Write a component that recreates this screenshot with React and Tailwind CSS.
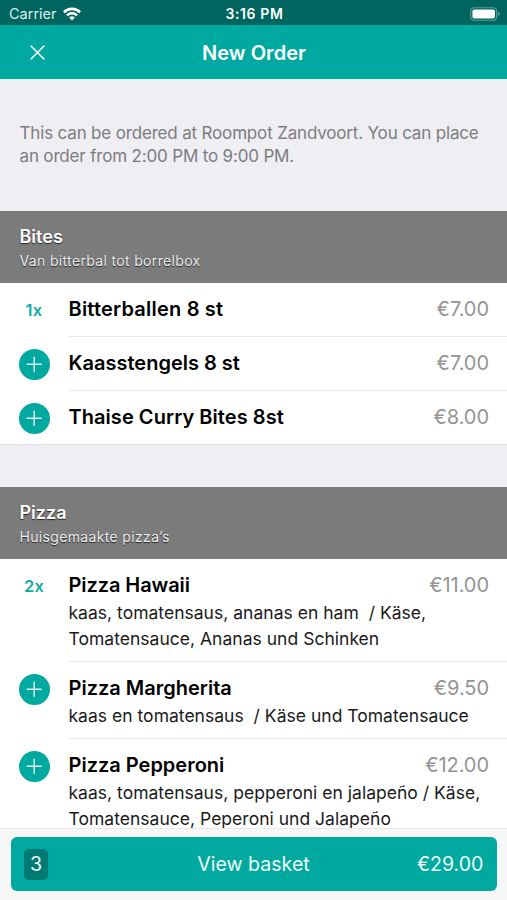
import React from "react";

const bites = [
  { qty: 1, name: "Bitterballen 8 st", price: "€7.00", track: "tracking-[0.2px]", height: "h-[54px]" },
  { name: "Kaasstengels 8 st", price: "€7.00", track: "tracking-[0px]", height: "h-[54px]" },
  { name: "Thaise Curry Bites 8st", price: "€8.00", track: "tracking-[0.05px]", height: "h-[53px]" },
];

const pizzas = [
  {
    qty: 2,
    name: "Pizza Hawaii",
    price: "€11.00",
    track: "tracking-[-0.08px]",
    lines: ["kaas, tomatensaus, ananas en ham  / Käse,", "Tomatensauce, Ananas und Schinken"],
    height: "h-[103px]",
  },
  {
    name: "Pizza Margherita",
    price: "€9.50",
    track: "tracking-[0px]",
    lines: ["kaas en tomatensaus  / Käse und Tomatensauce"],
    height: "h-[77px]",
  },
  {
    name: "Pizza Pepperoni",
    price: "€12.00",
    track: "tracking-[0px]",
    lines: ["kaas, tomatensaus, pepperoni en jalapeño / Käse,", "Tomatensauce, Peperoni und Jalapeño"],
    height: "h-[103px]",
  },
];

function StatusBar() {
  return (
    <div className="grid h-[25px] shrink-0 grid-cols-3 items-center bg-[#00645f] pt-[3px] pr-[6px] pl-[9px] text-white">
      <div className="flex items-center gap-[6px]">
        <span className="text-[14.5px] leading-none text-[#d9efed]">Carrier</span>
        <svg width="18" height="14" viewBox="0 0 18 14" fill="none" stroke="#fff" strokeWidth="2.6">
          <path d="M.9 5.2a11.6 11.6 0 0 1 16.2 0" />
          <path d="M3.9 8.4a7.3 7.3 0 0 1 10.2 0" />
          <path d="M9 13.6l-2.9-3a4.1 4.1 0 0 1 5.8 0z" fill="#fff" stroke="none" />
        </svg>
      </div>
      <div className="pr-[1px] text-center text-[14px] leading-none font-semibold tracking-[0.6px]">3:16 PM</div>
      <svg className="justify-self-end" width="31" height="14" viewBox="0 0 31 14">
        <rect x=".7" y=".7" width="26" height="12.6" rx="3.6" fill="none" stroke="#5e9f9b" strokeWidth="1.1" />
        <rect x="2.4" y="2.4" width="22.6" height="9.2" rx="2" fill="#fff" />
        <path d="M28.2 4.8v4.4c1-.4 1.6-1.2 1.6-2.2s-.6-1.8-1.6-2.2z" fill="#5e9f9b" />
      </svg>
    </div>
  );
}

function Header() {
  return (
    <header className="grid h-[54px] shrink-0 grid-cols-[100px_1fr_100px] items-center bg-[#00a99f] text-white">
      <svg className="ml-[30px]" width="15" height="15" viewBox="0 0 15 15" stroke="#fff" strokeWidth="1.5" strokeLinecap="round">
        <path d="M1 1l13 13M14 1L1 14" />
      </svg>
      <h1 className="pt-px pl-px text-center text-[20px] leading-none font-semibold tracking-[0.05px]">New Order</h1>
    </header>
  );
}

function SectionBand({ title, subtitle }) {
  return (
    <div className="h-[72px] shrink-0 bg-[#7b7b7b] pt-[14px] pl-[19.5px] text-white [text-shadow:0_1px_1px_rgba(0,0,0,0.7)]">
      <h2 className="text-[18px] leading-[24px] font-semibold">{title}</h2>
      <p className="pt-[2px] text-[14px] leading-[20px] tracking-[0.34px] text-[#ececec]">{subtitle}</p>
    </div>
  );
}

function Marker({ qty }) {
  if (qty) {
    return (
      <span className="mt-[15px] w-[30px] text-center text-[16.5px] leading-[24px] font-semibold tracking-[0.2px] text-[#14aca3]">{qty}x</span>
    );
  }
  return (
    <span className="mt-[12px] flex size-[31px] items-center justify-center rounded-full bg-[#00a99f]">
      <svg width="17" height="17" viewBox="0 0 17 17" stroke="#e4f6f5" strokeWidth="1.5" strokeLinecap="round">
        <path d="M8.2 1.2v14M1.2 8.2h14" />
      </svg>
    </span>
  );
}

function Item({ item, last }) {
  return (
    <div className={`flex shrink-0 items-start bg-white pl-[19px] ${item.height}`}>
      <div className="flex w-[49px] shrink-0">
        <Marker qty={item.qty} />
      </div>
      <div className={`flex h-full min-w-0 grow flex-col pt-[13px] pr-[18px] ${last ? "" : "border-b border-[#ebebeb]"}`}>
        <div className="flex items-center justify-between pl-[0.5px] leading-[26px]">
          <h3 className={`text-[20px] font-semibold text-black ${item.track}`}>{item.name}</h3>
          <span className="text-[20px] tracking-[-0.05px] text-[#949494]">{item.price}</span>
        </div>
        {item.lines && (
          <div className="pt-[2px] pl-[0.5px] text-[17.5px] leading-[25.5px] tracking-[0.02px] whitespace-pre text-[#1a1a1a]">
            {item.lines.map((l) => (
              <p key={l}>{l}</p>
            ))}
          </div>
        )}
      </div>
    </div>
  );
}

function BasketBar() {
  return (
    <footer className="h-[72px] shrink-0 border-t border-[#e9e9e9] bg-[#f7f7f7] px-[10.5px] pt-[8px]">
      <button className="grid h-[54px] w-full grid-cols-3 items-center rounded-[6px] bg-[#00a99f] pr-[13px] pl-[13px] text-[19.6px] leading-none text-[#eefaf9]">
        <span className="flex h-[31px] w-[24px] items-center justify-center rounded-[5px] bg-[#007a73] pt-[2px] pl-px">3</span>
        <span className="pt-[2px] text-center">View basket</span>
        <span className="pt-[2px] text-right">€29.00</span>
      </button>
    </footer>
  );
}

export default function App() {
  return (
    <div className="flex h-[900px] w-[507px] flex-col overflow-hidden bg-[#efeef3] font-['Inter','Liberation_Sans',sans-serif]">
      <StatusBar />
      <Header />
      <main className="flex min-h-0 grow flex-col overflow-hidden">
        <div className="h-[132px] shrink-0 pt-[42.5px] pl-[19.5px] text-[17px] leading-[23.5px] tracking-[-0.17px] text-[#7c7c80]">
          <p>This can be ordered at Roompot Zandvoort. You can place</p>
          <p>an order from 2:00 PM to 9:00 PM.</p>
        </div>
        <SectionBand title="Bites" subtitle="Van bitterbal tot borrelbox" />
        {bites.map((b, i) => (
          <Item key={b.name} item={b} last={i === bites.length - 1} />
        ))}
        <div className="h-[43px] shrink-0 border-t border-[#e4e4e8]" />
        <SectionBand title="Pizza" subtitle="Huisgemaakte pizza’s" />
        {pizzas.map((p) => (
          <Item key={p.name} item={p} />
        ))}
      </main>
      <BasketBar />
    </div>
  );
}
